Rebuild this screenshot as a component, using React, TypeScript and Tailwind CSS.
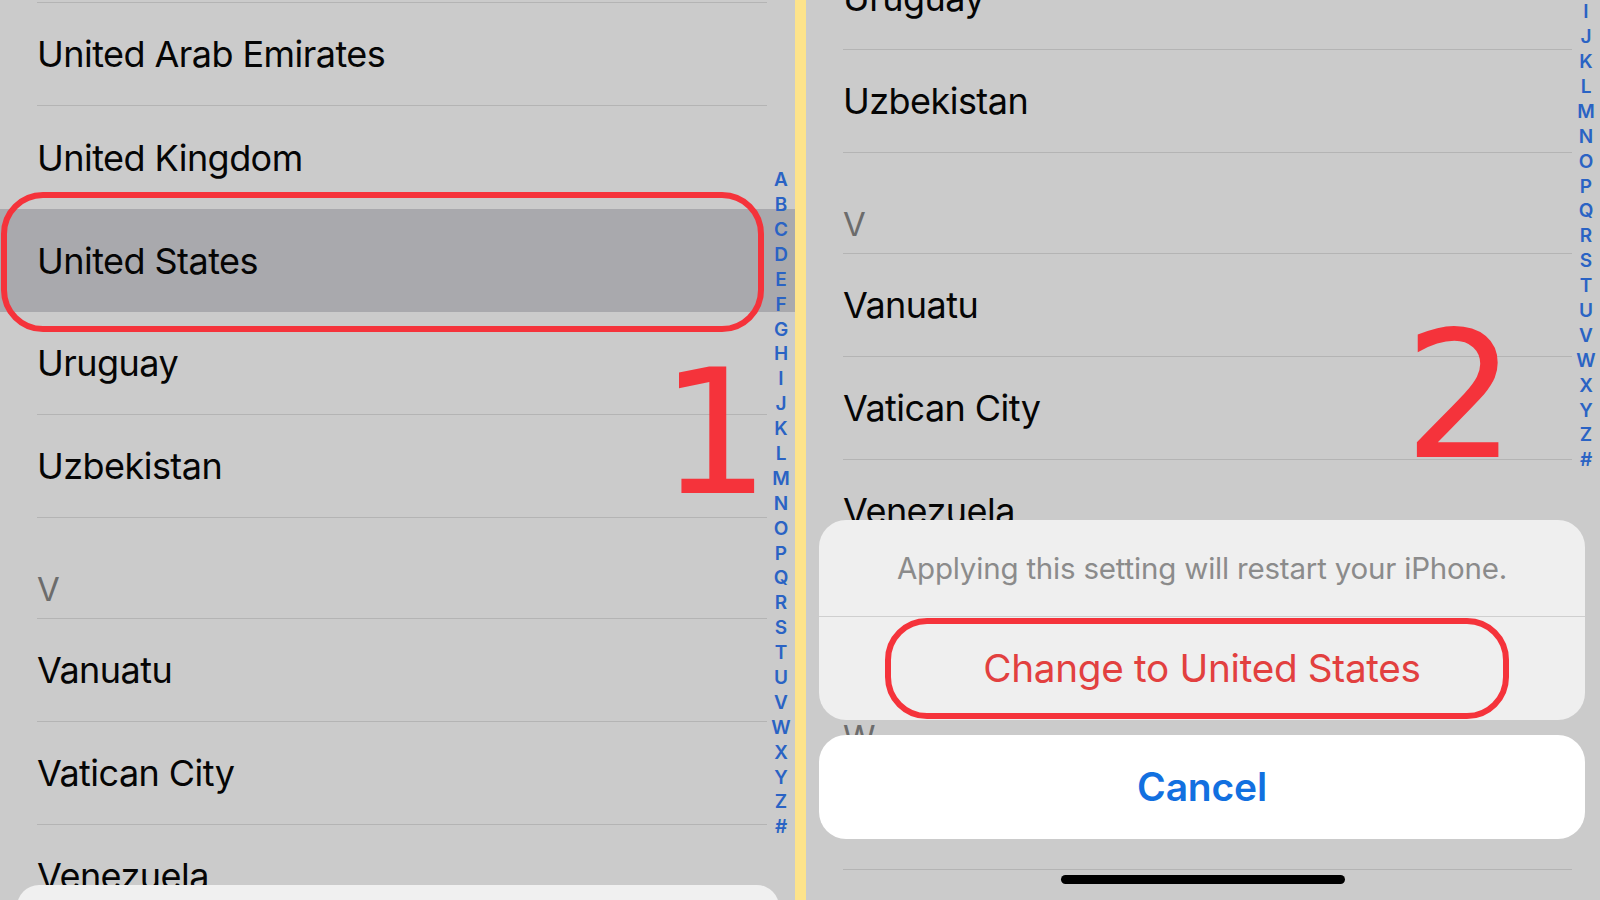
import React from 'react';

interface Row {
  label: string;
  header?: boolean;
  highlight?: boolean;
  noSep?: boolean;
}

const rows: Row[] = [
  { label: 'Ukraine' },
  { label: 'United Arab Emirates' },
  { label: 'United Kingdom', noSep: true },
  { label: 'United States', highlight: true, noSep: true },
  { label: 'Uruguay' },
  { label: 'Uzbekistan' },
  { label: 'V', header: true },
  { label: 'Vanuatu' },
  { label: 'Vatican City' },
  { label: 'Venezuela' },
  { label: 'Vietnam' },
  { label: 'W', header: true },
  { label: 'Wallis & Futuna' },
  { label: 'Western Sahara' },
  { label: 'Y', header: true },
];

const letters = 'ABCDEFGHIJKLMNOPQRSTUVWXYZ#'.split('');

const font = "font-['Inter','Noto_Sans',sans-serif]";

const CountryRow = ({ row, showHighlight }: { row: Row; showHighlight: boolean }) => {
  if (row.header) {
    return (
      <div className="h-[101px] pl-[37px] pr-[28px]">
        <div className="h-full flex items-end pb-[10px] border-b border-[#b4b4b4]">
          <span className="text-[33px] leading-[38px] text-[#6c6c6c]">{row.label}</span>
        </div>
      </div>
    );
  }
  const hl = row.highlight && showHighlight;
  return (
    <div className={`h-[103px] pl-[37px] pr-[28px] ${hl ? 'bg-[#a9a9ad]' : ''}`}>
      <div className={`h-full flex items-center ${row.noSep ? '' : 'border-b border-[#b4b4b4]'}`}>
        <span className="text-[36px] tracking-[-0.55px] text-[#050505]">{row.label}</span>
      </div>
    </div>
  );
};

const IndexBar = ({ className }: { className: string }) => (
  <div className={`absolute w-[26px] flex flex-col items-center ${className}`}>
    {letters.map((l) => (
      <div key={l} className="h-[24.9px] flex items-center text-[19px] font-semibold text-[#2a63c4]">
        {l}
      </div>
    ))}
  </div>
);

const App = () => {
  return (
    <div className={`relative w-[1600px] h-[900px] flex overflow-hidden bg-[#cbcbcb] ${font}`}>
      {/* left screen */}
      <div className="relative w-[795px] h-[900px] overflow-hidden bg-[#cbcbcb]">
        <div className="flex flex-col -mt-[100px]">
          {rows.map((r) => (
            <CountryRow key={r.label} row={r} showHighlight />
          ))}
        </div>
        <IndexBar className="left-[768px] top-[168px]" />
        <div className="absolute left-[17px] top-[885px] w-[762px] h-[40px] rounded-t-[22px] bg-[#f0f0f0]" />
      </div>

      {/* divider */}
      <div className="w-[11px] h-[900px] bg-[#fde38b]" />

      {/* right screen */}
      <div className="relative w-[794px] h-[900px] overflow-hidden bg-[#cbcbcb]">
        <div className="flex flex-col -mt-[465px]">
          {rows.map((r) => (
            <CountryRow key={r.label} row={r} showHighlight={false} />
          ))}
        </div>
        <IndexBar className="left-[767px] -top-[199px]" />

        {/* action sheet */}
        <div className="absolute left-[13px] top-[520px] w-[766px] flex flex-col gap-[15px]">
          <div className="rounded-[27px] bg-[#efefef] overflow-hidden">
            <div className="h-[97px] flex items-center justify-center border-b border-[#cfcfcf]">
              <span className="text-[29.5px] tracking-[-0.2px] text-[#8b8b8b]">
                Applying this setting will restart your iPhone.
              </span>
            </div>
            <div className="h-[103px] flex items-center justify-center">
              <span className="text-[38.7px] tracking-[-0.3px] text-[#e2403f]">Change to United States</span>
            </div>
          </div>
          <div className="h-[104px] rounded-[27px] bg-white flex items-center justify-center">
            <span className="text-[39px] font-semibold tracking-[-0.2px] text-[#1270e0]">Cancel</span>
          </div>
        </div>
        <div className="absolute left-[255px] top-[875px] w-[284px] h-[9px] rounded-full bg-black" />
      </div>

      {/* red annotations */}
      <div className="absolute left-[1px] top-[192px] w-[763px] h-[140px] rounded-[42px] border-[6px] border-[#f5333b]" />
      <div className="absolute left-[885px] top-[618px] w-[624px] h-[101px] rounded-[42px] border-[6px] border-[#f5333b]" />
      <div className="absolute left-[660px] top-[347px] text-[173px] leading-none font-['DejaVu_Sans',sans-serif] text-[#f5333b]">
        1
      </div>
      <div className="absolute left-[1404px] top-[309px] text-[176px] leading-none font-['DejaVu_Sans',sans-serif] text-[#f5333b]">
        2
      </div>
    </div>
  );
};

export default App;
